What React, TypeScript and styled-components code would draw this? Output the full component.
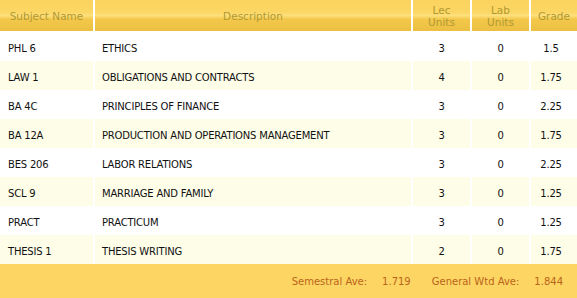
import React from 'react'
import styled, { createGlobalStyle } from 'styled-components'

interface Subject {
  code: string
  title: string
  lec: number
  lab: number
  grade: string
}

const subjects: Subject[] = [
  { code: 'PHL 6', title: 'ETHICS', lec: 3, lab: 0, grade: '1.5' },
  { code: 'LAW 1', title: 'OBLIGATIONS AND CONTRACTS', lec: 4, lab: 0, grade: '1.75' },
  { code: 'BA 4C', title: 'PRINCIPLES OF FINANCE', lec: 3, lab: 0, grade: '2.25' },
  { code: 'BA 12A', title: 'PRODUCTION AND OPERATIONS MANAGEMENT', lec: 3, lab: 0, grade: '1.75' },
  { code: 'BES 206', title: 'LABOR RELATIONS', lec: 3, lab: 0, grade: '2.25' },
  { code: 'SCL 9', title: 'MARRIAGE AND FAMILY', lec: 3, lab: 0, grade: '1.25' },
  { code: 'PRACT', title: 'PRACTICUM', lec: 3, lab: 0, grade: '1.25' },
  { code: 'THESIS 1', title: 'THESIS WRITING', lec: 2, lab: 0, grade: '1.75' },
]

const GlobalStyle = createGlobalStyle`
  body {
    margin: 0;
    background: #fff;
    font-family: 'DejaVu Sans', Verdana, sans-serif;
  }
`

const Table = styled.table`
  width: 577px;
  border-collapse: collapse;
  border-spacing: 0;
  table-layout: fixed;
  font-size: 10px;
  letter-spacing: -0.2px;
  color: #111;
`

const Col = styled.col<{ $w: number }>`
  width: ${(p) => p.$w}px;
`

const HeadCell = styled.th`
  height: 31px;
  padding: 0 0 0 2px;
  font-weight: normal;
  font-size: 10.5px;
  line-height: 12px;
  letter-spacing: 0;
  color: #b09833;
  text-align: center;
  border-bottom: 2px solid #fff;
  background:
    linear-gradient(to right, #fff 0, #fff 2px, transparent 2px),
    linear-gradient(
      #fbd35e 0%,
      #fcd765 40%,
      #fde07c 50%,
      #f3c84a 62%,
      #ecbf42 100%
    );
  &:first-child {
    padding-left: 0;
    background: linear-gradient(
      #fbd35e 0%,
      #fcd765 40%,
      #fde07c 50%,
      #f3c84a 62%,
      #ecbf42 100%
    );
  }
`

const Row = styled.tr<{ $alt: boolean }>`
  height: 29px;
  background: ${(p) => (p.$alt ? '#fdfde8' : '#ffffff')};
`

const Cell = styled.td<{ $align?: 'left' | 'center' }>`
  padding: 3px 0 0 ${(p) => (p.$align === 'center' ? 2 : 9)}px;
  text-align: ${(p) => p.$align || 'left'};
  box-shadow: inset 2px 0 0 #fff;
  white-space: nowrap;
  &:first-child {
    box-shadow: none;
    padding-left: 8px;
  }
`

const GradeCell = styled(Cell)`
  padding-right: 6px;
`

const Footer = styled.div`
  width: 577px;
  height: 34px;
  background: #fdd562;
  display: flex;
  align-items: center;
  justify-content: flex-end;
  padding: 1px 14px 0 0;
  box-sizing: border-box;
  font-size: 10px;
  color: #b9641c;
`

const Stat = styled.span`
  display: flex;
  gap: 15px;
  margin-left: 21px;
`

export default function App() {
  return (
    <>
      <GlobalStyle />
      <Table>
        <colgroup>
          <Col $w={93} />
          <Col $w={318} />
          <Col $w={59} />
          <Col $w={59} />
          <Col $w={48} />
        </colgroup>
        <thead>
          <tr>
            <HeadCell>Subject Name</HeadCell>
            <HeadCell>Description</HeadCell>
            <HeadCell>
              Lec
              <br />
              Units
            </HeadCell>
            <HeadCell>
              Lab
              <br />
              Units
            </HeadCell>
            <HeadCell>Grade</HeadCell>
          </tr>
        </thead>
        <tbody>
          {subjects.map((s, i) => (
            <Row key={s.code} $alt={i % 2 === 1}>
              <Cell>{s.code}</Cell>
              <Cell>{s.title}</Cell>
              <Cell $align="center">{s.lec}</Cell>
              <Cell $align="center">{s.lab}</Cell>
              <GradeCell $align="center">{s.grade}</GradeCell>
            </Row>
          ))}
        </tbody>
      </Table>
      <Footer>
        <Stat>
          <span>Semestral Ave:</span>
          <span>1.719</span>
        </Stat>
        <Stat>
          <span>General Wtd Ave:</span>
          <span>1.844</span>
        </Stat>
      </Footer>
    </>
  )
}
